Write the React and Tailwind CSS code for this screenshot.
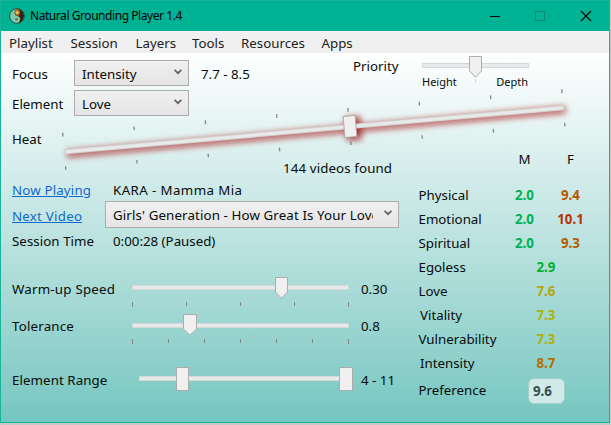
import React from "react";

const MENU = [
  ["Playlist", "w-[61.5px]"],
  ["Session", "w-[65px]"],
  ["Layers", "w-[56.5px]"],
  ["Tools", "w-[49px]"],
  ["Resources", "w-[80.5px]"],
  ["Apps", "w-[50px]"],
];

const PAIRED = [
  ["Physical", "2.0", "9.4", "text-[#b85a04]"],
  ["Emotional", "2.0", "10.1", "text-[#b83204]"],
  ["Spiritual", "2.0", "9.3", "text-[#b45c04]"],
];

const SINGLE = [
  ["Egoless", "2.9", "text-[#00b22c]", ""],
  ["Love", "7.6", "text-[#b4a60a]", ""],
  ["Vitality", "7.3", "text-[#b0b00a]", "pl-[1.5px]"],
  ["Vulnerability", "7.3", "text-[#b0b00a]", ""],
  ["Intensity", "8.7", "text-[#b46e04]", "pl-[1.5px]"],
];

function Select({ children, className, textClass }) {
  return (
    <div className={"flex justify-between border border-[#acacac] bg-linear-to-b from-[#f0f0f0] to-[#e5e5e5] " + className}>
      <span className={"overflow-hidden whitespace-nowrap ml-[7px] " + textClass}>{children}</span>
      <svg className="mt-[8px] mr-[6px] h-[6px] w-[8px] shrink-0" viewBox="0 0 8 6">
        <path d="M0.6 0.9 L4 4.2 L7.4 0.9" fill="none" stroke="#606060" strokeWidth="1.7" />
      </svg>
    </div>
  );
}

function Track({ x, y, w }) {
  return <rect x={x + 0.5} y={y + 0.5} width={w - 1} height="4" fill="#e7eaea" stroke="#d3d9d8" />;
}

function Pointer({ x, y, w = 13 }) {
  return (
    <path
      d={`M${x + 0.5} ${y + 0.5} H${x + w - 0.5} V${y + 15} L${x + w / 2} ${y + 21.2} L${x + 0.5} ${y + 15} Z`}
      fill="#f0f0f0"
      stroke="#acacac"
    />
  );
}

function TickSlider({ ticks, thumb, thumbWidth, trackTop, className = "" }) {
  const step = 216 / (ticks - 1);
  return (
    <svg className={"w-[218px] h-[31px] shrink-0 " + className} viewBox="0 0 218 31">
      <Track x={0} y={trackTop} w={217} />
      {Array.from({ length: ticks }, (_, i) => (
        <rect key={i} x={Math.round(i * step)} y="25" width="1" height={i === 0 || i === ticks - 1 ? 5 : 4} fill="#7f8a89" />
      ))}
      <Pointer x={thumb} y={0} w={thumbWidth} />
    </svg>
  );
}

function HeatSlider() {
  return (
    <svg className="pointer-events-none absolute left-[49px] top-[79px] h-[96px] w-[530px]" viewBox="50 80 530 96">
      <defs>
        <filter id="glow" x="40" y="70" width="550" height="110" filterUnits="userSpaceOnUse">
          <feGaussianBlur stdDeviation="3" />
        </filter>
      </defs>
      <g filter="url(#glow)">
        <path d="M67 154 L565.5 109.7" stroke="#a51414" strokeOpacity="0.7" strokeWidth="7" />
        <rect x="346" y="117" width="15" height="23" fill="#970f14" fillOpacity="0.8" transform="rotate(-5 353 129)" />
      </g>
      <path d="M64.7 151.8 L563.8 107.7" stroke="#d2d2d2" strokeWidth="5" />
      <path d="M65.7 151.7 L562.8 107.8" stroke="#e8e9e9" strokeWidth="3" />
      {Array.from({ length: 8 }, (_, i) => (
        <g key={i} stroke="#828888" strokeWidth="1.3">
          <path d={`M${62.7 + i * 71.3} ${132.7 - i * 6.2} l.3 3.8`} />
          <path d={`M${65.5 + i * 71.3} ${166.2 - i * 6.2} l.3 3.6`} />
        </g>
      ))}
      <rect x="344" y="116" width="12" height="21" fill="#f0f0f0" stroke="#b4aaaa" transform="rotate(-4.6 350 126.5)" />
    </svg>
  );
}

export default function App() {
  return (
    <div className="h-[425px] w-[611px] overflow-hidden bg-[#c6c8c8] font-['Noto_Sans','Open_Sans',sans-serif] text-[13.3px] leading-[20px] text-[#060b0b]">
      <div className="relative flex h-[423px] w-[610px] flex-col border border-[#18b39b] bg-white">
        <header className="flex h-[30px] shrink-0 items-center bg-[#00b294]">
          <svg className="ml-[8px] h-[16px] w-[16px]" viewBox="0 0 16 16">
            <circle cx="8" cy="8" r="7.4" fill="#7bc9b0" stroke="#24483b" strokeWidth="0.9" />
            <path d="M8 .8 A7.2 7.2 0 0 1 9 15.1 C13 11 11 8.5 8 8 C4.5 7 5 2 8 .8Z" fill="#302713" />
            <path d="M8 1 C4.6 2.4 5.2 7 8.3 7.8 C11 7.8 11.5 4.5 10.3 2Z" fill="#b57a20" />
            <circle cx="8.1" cy="4.6" r="1.2" fill="#e8d9a0" />
            <circle cx="7.6" cy="11.3" r="1.3" fill="#8a6a26" />
          </svg>
          <h1 className="ml-[5px] w-[400px] text-[12px] tracking-[-0.44px] text-black">Natural Grounding Player 1.4</h1>
          <svg className="ml-[60px] h-[12px] w-[104px]" viewBox="0 0 104 12">
            <path d="M0 6.5 H10" stroke="#000" />
            <rect x="45.5" y="1.5" width="9" height="9" fill="none" stroke="#058b75" />
            <path d="M91 1 L101 11 M101 1 L91 11" stroke="#000" strokeWidth="1.1" />
          </svg>
        </header>

        <nav className="flex h-[22px] shrink-0 items-center bg-[#f0f0f0] pt-[1px] pl-[8px] text-[#212121]">
          {MENU.map(([label, width]) => (
            <span key={label} className={width}>{label}</span>
          ))}
        </nav>

        <main className="flex min-h-0 flex-1 bg-linear-to-b from-white via-[#bce3e0] via-50% to-[#75c6c0]">
          <section className="flex w-[406px] shrink-0 flex-col pl-[11px]">
            <div className="flex">
              <div className="w-[341px]">
                <div className="mt-[7px] flex h-[26px] items-center">
                  <span className="w-[62px] pt-[1px]">Focus</span>
                  <Select className="h-[26px] w-[115px]" textClass="pt-[3px]">Intensity</Select>
                  <span className="ml-[12px] pt-[1px]">7.7 - 8.5</span>
                </div>
                <div className="mt-[4px] flex h-[26px] items-center">
                  <span className="w-[62px] pt-[1px]">Element</span>
                  <Select className="h-[26px] w-[115px]" textClass="pt-[3px]">Love</Select>
                </div>
              </div>
              <span className="mt-[3px]">Priority</span>
            </div>
            <span className="mt-[13px] h-[20px]">Heat</span>
            <span className="mt-[9px] h-[20px] pl-[271px] tracking-[0.12px]">144 videos found</span>
            <div className="mt-[2px] flex h-[20px]">
              <span className="w-[101px]"><a className="tracking-[0.16px] text-[#1268cc] underline">Now Playing</a></span>
              <span className="tracking-[0.4px]">KARA - Mamma Mia</span>
            </div>
            <div className="mt-[1px] flex h-[27px]">
              <span className="w-[93px] shrink-0 pt-[5px]"><a className="tracking-[0.24px] text-[#1268cc] underline">Next Video</a></span>
              <Select className="h-[27px] w-[294px] shrink-0" textClass="pt-[3px] w-[260px] tracking-[0.12px]">Girls&#39; Generation - How Great Is Your Love</Select>
            </div>
            <div className="mt-[3px] flex h-[20px]">
              <span className="w-[101px] tracking-[0.06px]">Session Time</span>
              <span>0:00:28 (Paused)</span>
            </div>
            <div className="mt-[26px] flex h-[37px]">
              <span className="w-[120px] pt-[2px] tracking-[0.22px]">Warm-up Speed</span>
              <TickSlider ticks={5} thumb={143} thumbWidth={13} trackTop={8} />
              <span className="ml-[11px] pt-[2px]">0.30</span>
            </div>
            <div className="flex h-[53px]">
              <span className="w-[120px] pt-[2px] tracking-[0.2px]">Tolerance</span>
              <TickSlider ticks={7} thumb={51} thumbWidth={14} trackTop={9} />
              <span className="ml-[11px] pt-[2px]">0.8</span>
            </div>
            <div className="flex h-[26px]">
              <span className="w-[126px] pt-[3px] tracking-[0.08px]">Element Range</span>
              <svg className="h-[24px] w-[216px] shrink-0" viewBox="0 0 216 24">
                <Track x={1} y={9} w={208} />
                <rect x="38.5" y=".5" width="12" height="23" fill="#f0f0f0" stroke="#acacac" />
                <rect x="201.5" y=".5" width="13" height="23" fill="#f0f0f0" stroke="#acacac" />
              </svg>
              <span className="ml-[7px] pt-[3px]">4 - 11</span>
            </div>
          </section>

          <section className="flex w-[190px] flex-col pl-[11.5px]">
            <svg className="ml-[3.5px] mt-[2px] h-[28px] w-[108px] shrink-0" viewBox="0 0 108 28">
              <Track x={0} y={8} w={107} />
              <path d="M53.5 24 V28" stroke="#d3dbda" />
              <Pointer x={47} y={1} />
            </svg>
            <div className="mt-[-9px] ml-[3.5px] flex h-[16px] w-[106px] justify-between text-[11px] leading-[16px]">
              <span>Height</span>
              <span>Depth</span>
            </div>
            <div className="mt-[59px] flex h-[20px] pl-[83px] text-center">
              <span className="w-[46px]">M</span>
              <span className="w-[46px]">F</span>
            </div>
            <div className="mt-[16px]">
              {PAIRED.map(([label, m, f, color]) => (
                <div key={label} className="flex h-[24px]">
                  <span className="w-[83px]">{label}</span>
                  <span className="w-[46px] text-center font-bold text-[#00b250]">{m}</span>
                  <span className={"w-[46px] text-center font-bold " + color}>{f}</span>
                </div>
              ))}
              {SINGLE.map(([label, value, color, indent]) => (
                <div key={label} className="flex h-[24px]">
                  <span className={"w-[104.5px] " + indent}>{label}</span>
                  <span className={"w-[46px] text-center font-bold " + color}>{value}</span>
                </div>
              ))}
            </div>
            <div className="mt-[1px] flex h-[26px]">
              <span className="w-[109.5px] pt-[2px]">Preference</span>
              <span className="h-[26px] w-[37px] rounded-[6px] border border-[#a5cfcc] bg-[#cfeae8] pl-[4px] pt-[2px] font-bold text-[#34504f]">9.6</span>
            </div>
          </section>
        </main>
        <HeatSlider />
      </div>
    </div>
  );
}
